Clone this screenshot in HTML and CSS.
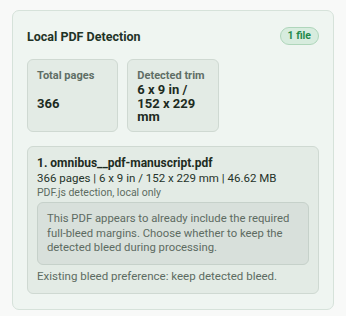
FILE: index.html
```html
<!DOCTYPE html>
<html lang="en">
<head>
    <meta charset="UTF-8">
    <meta name="viewport" content="width=device-width, initial-scale=1.0">
    <title>Local PDF Detection</title>
    <link rel="stylesheet" href="styles.css">
</head>
<body>
    <div class="panel">
        <div class="panel-header">
            <h2 class="panel-title">Local PDF Detection</h2>
            <span class="badge">1 file</span>
        </div>
        <div class="stats">
            <div class="stat">
                <div class="stat-label">Total pages</div>
                <div class="stat-value">366</div>
            </div>
            <div class="stat">
                <div class="stat-label">Detected trim</div>
                <div class="stat-value">6 x 9 in /<br>152 x 229<br>mm</div>
            </div>
        </div>
        <div class="file-card">
            <div class="file-name">1. omnibus__pdf-manuscript.pdf</div>
            <div class="file-meta">366 pages | 6 x 9 in / 152 x 229 mm | 46.62 MB</div>
            <div class="file-source">PDF.js detection, local only</div>
            <div class="note">This PDF appears to already include the required full-bleed margins. Choose whether to keep the detected bleed during processing.</div>
            <div class="file-pref">Existing bleed preference: keep detected bleed.</div>
        </div>
    </div>
</body>
</html>
```

FILE: styles.css
```css
body {
    margin: 0;
    padding: 10px 12px;
    font-family: Roboto, "Liberation Sans", sans-serif;
    background-color: #f8f9f8;
    color: #1d2b22;
}
.panel {
    background-color: #eff5f1;
    border: 1px solid #d6e2da;
    border-radius: 7px;
    padding: 16px 14px 15px;
}
.panel-header {
    display: flex;
    align-items: center;
    justify-content: space-between;
    height: 18px;
}
.panel-title {
    margin: 0;
    font-size: 12.5px;
    font-weight: 700;
    color: #1f3327;
}
.badge {
    box-sizing: border-box;
    height: 18px;
    padding: 0 7px;
    border: 1px solid #afd6bb;
    border-radius: 9px;
    background-color: #d7ecde;
    color: #1f8a4b;
    font-size: 10.5px;
    font-weight: 700;
    line-height: 16px;
}
.stats {
    display: grid;
    grid-template-columns: repeat(3, 1fr);
    gap: 9px;
    margin-top: 14px;
}
.stat {
    display: flex;
    flex-direction: column;
    background-color: #e3ebe5;
    border: 1px solid #cfd9d2;
    border-radius: 6px;
    padding: 9px 9px 7px;
    min-height: 55px;
}
.stat-label {
    font-size: 11px;
    font-weight: 700;
    color: #5f6e65;
    line-height: 13px;
}
.stat-value {
    flex: 1;
    display: flex;
    align-items: center;
    font-size: 13px;
    font-weight: 700;
    line-height: 13.5px;
    margin-top: 1px;
    color: #1d2b22;
}
.file-card {
    margin-top: 14px;
    background-color: #e3ebe5;
    border: 1px solid #cfd9d2;
    border-radius: 6px;
    padding: 8px 9px 9px;
}
.file-name {
    font-size: 12px;
    font-weight: 700;
    line-height: 16px;
}
.file-meta {
    font-size: 11.5px;
    line-height: 15px;
    color: #25332a;
}
.file-source {
    font-size: 10.5px;
    line-height: 14px;
    color: #5d6b62;
}
.note {
    margin-top: 2px;
    background-color: #d8e0db;
    border: 1px solid #c6d1ca;
    border-radius: 6px;
    padding: 9px 6px 8px 9px;
    font-size: 11.3px;
    line-height: 14.5px;
    color: #5d6b62;
}
.file-pref {
    margin-top: 4px;
    font-size: 11.5px;
    line-height: 15px;
    color: #5d6b62;
}
```
